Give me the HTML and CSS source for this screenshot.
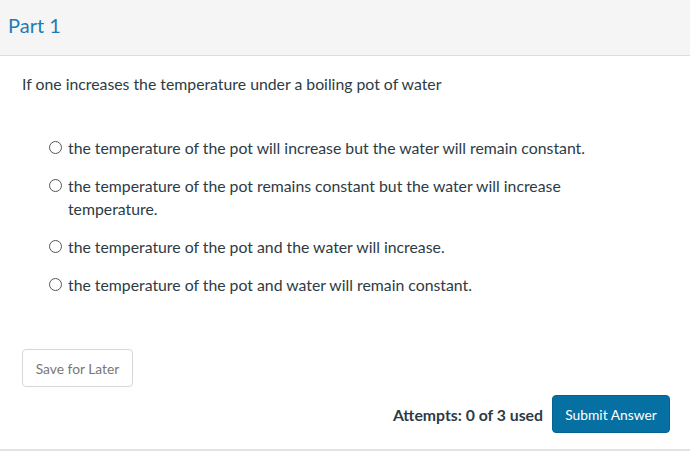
FILE: index.html
```html
<!DOCTYPE html>
<html lang="en">
  <head>
    <meta charset="UTF-8" />
    <meta name="viewport" content="width=device-width, initial-scale=1.0" />
    <title>Part 1</title>
    <link rel="stylesheet" href="styles.css">
  </head>
  <body>
    <!-- Question Header -->
    <div class="header">
      <h2>Part 1</h2>
    </div>

    <!-- Question Body -->
    <div class="question">
      <p class="question-text">If one increases the temperature under a boiling pot of water</p>

      <div class="answers">
        <label class="answer">
          <span class="radio"></span>
          <span class="answer-text">the temperature of the pot will increase but the water will remain constant.</span>
        </label>
        <label class="answer">
          <span class="radio"></span>
          <span class="answer-text">the temperature of the pot remains constant but the water will increase temperature.</span>
        </label>
        <label class="answer">
          <span class="radio"></span>
          <span class="answer-text">the temperature of the pot and the water will increase.</span>
        </label>
        <label class="answer">
          <span class="radio"></span>
          <span class="answer-text">the temperature of the pot and water will remain constant.</span>
        </label>
      </div>

      <button class="btn-save" type="button">Save for Later</button>
    </div>

    <!-- Footer -->
    <div class="footer">
      <span class="attempts">Attempts: 0 of 3 used</span>
      <button class="btn-submit" type="button">Submit Answer</button>
    </div>
  </body>
</html>
```

FILE: styles.css
```css
/* Global Reset */
* {
  margin: 0;
  padding: 0;
  box-sizing: border-box;
}

body {
  font-family: Lato, "Open Sans", sans-serif;
  background-color: #fff;
  color: #2d3b45;
  width: 690px;
}

/* Header */
.header {
  height: 56px;
  background-color: #f5f5f5;
  border-bottom: 1px solid #dcdcdc;
  padding: 0 8px;
  display: flex;
  align-items: center;
}

.header h2 {
  font-size: 20px;
  font-weight: normal;
  color: #1f7bb6;
  margin-top: -6px;
}

/* Question */
.question {
  padding: 18px 22px 0;
}

.question-text {
  font-size: 15.8px;
  line-height: 20px;
}

.answers {
  margin-top: 42px;
  padding-left: 27px;
  width: 600px;
  display: flex;
  flex-direction: column;
  gap: 15px;
}

.answer {
  display: flex;
  align-items: flex-start;
  gap: 6px;
  font-size: 15.8px;
  line-height: 23px;
  cursor: pointer;
}

.radio {
  flex: none;
  width: 13px;
  height: 13px;
  margin-top: 5px;
  border: 1px solid #555;
  border-radius: 50%;
  background-color: #fff;
}

.answer-text {
  width: 540px;
}

/* Buttons */
.btn-save {
  margin-top: 53px;
  width: 111px;
  height: 38px;
  background-color: #fff;
  border: 1px solid #d7d7d7;
  border-radius: 4px;
  color: #777;
  font-family: inherit;
  font-size: 13.8px;
  cursor: pointer;
}

.footer {
  margin-top: 8px;
  padding: 0 20px 16px;
  display: flex;
  justify-content: flex-end;
  align-items: center;
  gap: 9px;
  border-bottom: 2px solid #e3e3e3;
}

.attempts {
  font-size: 15.8px;
  font-weight: bold;
  color: #2d3b45;
}

.btn-submit {
  width: 118px;
  height: 38px;
  background-color: #0770a3;
  border: 1px solid #06638f;
  border-radius: 4px;
  color: #fff;
  font-family: inherit;
  font-size: 13.8px;
  cursor: pointer;
}
```
